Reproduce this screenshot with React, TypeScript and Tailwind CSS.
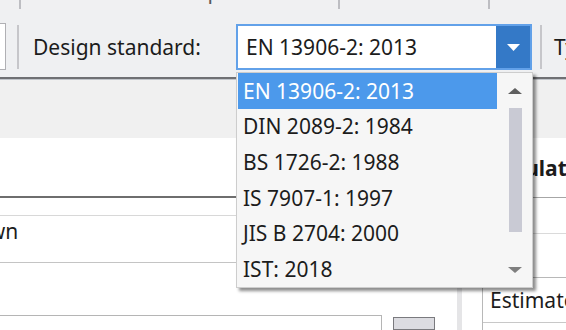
import React from "react";

const STANDARDS = [
  "EN 13906-2: 2013",
  "DIN 2089-2: 1984",
  "BS 1726-2: 1988",
  "IS 7907-1: 1997",
  "JIS B 2704: 2000",
  "IST: 2018",
];

const Tri = ({ up = false, color = "currentColor", w = 14, h = 7 }: { up?: boolean; color?: string; w?: number; h?: number }) => (
  <svg width={w} height={h} viewBox={`0 0 ${w} ${h}`} className="block">
    <path d={up ? `M0 ${h} L${w / 2} 0 L${w} ${h} Z` : `M0 0 L${w} 0 L${w / 2} ${h} Z`} fill={color} />
  </svg>
);

const Sep = ({ h = "h-[9px]" }: { h?: string }) => <div className={`w-[2px] shrink-0 bg-[#bdbdc2] ${h}`} />;

export default function App() {
  const selected = 0;

  return (
    <div className="relative w-[566px] h-[330px] overflow-hidden bg-white text-[#1c1c1c] font-['Noto_Sans',sans-serif] text-[21px] leading-[30px]">
      {/* tab strip, only the bottom of the labels shows */}
      <div className="flex items-start h-[10px] overflow-hidden bg-[#f0f0f2] text-[#5a5a5a] whitespace-nowrap">
        <div className="w-[19px] shrink-0" />
        <Sep />
        <div className="w-[33px] shrink-0" />
        <div className="w-[137px] shrink-0 -mt-[24px]">Validation</div>
        <div className="w-[147px] shrink-0 -mt-[24px]">Optimisation</div>
        <Sep />
        <div className="w-[50px] shrink-0" />
        <div className="w-[98px] shrink-0 -mt-[24px]">Print</div>
        <Sep />
        <div className="w-[28px] shrink-0" />
        <div className="shrink-0 -mt-[24px]">Tolerances</div>
      </div>

      {/* ribbon row */}
      <div className="flex h-[67px] pt-[14px] pb-[7px] bg-[#eff0f2] whitespace-nowrap">
        <div className="w-[6px] h-[47px] -mt-[1px] shrink-0 bg-white border border-l-0 border-[#b0b0b4]" />
        <div className="ml-[11px] my-[1px] w-[2px] shrink-0 bg-[#c6c6ca]" />
        <div className="ml-[14px] w-[203px] shrink-0 flex items-center">Design standard:</div>
        <div className="w-[296px] shrink-0 flex bg-white border-2 border-[#62a1e9]">
          <div className="flex-1 flex items-center pl-[8px]">{STANDARDS[selected]}</div>
          <div className="w-[34px] flex items-center justify-center bg-[#3479c7]">
            <Tri color="#ffffff" w={13} h={7} />
          </div>
        </div>
        <div className="ml-[8px] my-[1px] w-[2px] shrink-0 bg-[#c6c6ca]" />
        <div className="ml-[12px] flex items-center">Type</div>
      </div>
      <div className="h-[2px] bg-[#6f7074]" />
      <div className="h-[1px] bg-[#c0c4ca]" />
      <div className="h-[58px] bg-[#f0f0f0]" />

      {/* body */}
      <div className="flex h-[192px]">
        <div className="w-[457px] shrink-0 flex flex-col bg-white">
          <div className="h-[60px] shrink-0 border-b-2 border-[#6e6e6e]" />
          <div className="h-[17px] shrink-0" />
          <div className="h-[48px] shrink-0 border-t border-b border-t-[#d8d8d8] border-b-[#c4c4c4] whitespace-nowrap">
            <div className="-ml-[48px]">Shown</div>
          </div>
          <div className="h-[52px] shrink-0" />
          <div className="flex flex-1">
            <div className="w-[382px] border-t border-r border-[#b5b5b5]" />
            <div className="ml-[11px] mt-[2px] w-[42px] bg-[#dcdce1] border border-[#7a7a7e]" />
          </div>
        </div>
        <div className="w-[5px] shrink-0 bg-[#e5e5e7]" />
        <div className="flex-1 flex flex-col bg-white whitespace-nowrap">
          <div className="h-[60px] shrink-0 flex items-center pl-[20px] font-bold border-b border-[#a6a6a6]">Calculation</div>
          <div className="h-[36px] shrink-0 border-b border-[#dadada]" />
          <div className="h-[43px] shrink-0" />
          <div className="flex-1 ml-[20px] border-l border-t border-[#b8b8b8]">
            <div className="h-[45px] flex items-center pl-[7px] border-b border-[#c8c8c8]">Estimate</div>
          </div>
        </div>
      </div>

      {/* open dropdown list */}
      <div className="absolute left-[236px] top-[72px] w-[297px] h-[216px] flex bg-[#f6f6f6] border border-[#cdcdcd] shadow-[3px_3px_3px_rgba(0,0,0,0.45)]">
        <div className="w-[261px] pl-[1px]">
          {STANDARDS.map((s, i) => (
            <div
              key={s}
              className={`w-[259px] h-[35.6px] flex items-center pl-[5px] whitespace-nowrap ${i === selected ? "bg-[#4c99eb] text-white" : ""}`}
            >
              {s}
            </div>
          ))}
        </div>
        <div className="flex-1 flex flex-col items-center pt-[15px] pb-[14px]">
          <Tri up color="#5f5f5f" w={14} h={6} />
          <div className="mt-[14px] w-[13px] h-[124px] bg-[#c9cad4]" />
          <div className="flex-1" />
          <Tri color="#7f7f7f" w={14} h={6} />
        </div>
      </div>
    </div>
  );
}
